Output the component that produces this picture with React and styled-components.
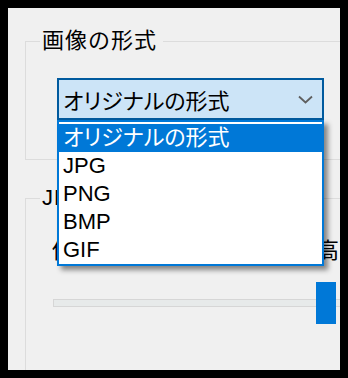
import React from "react";
import styled, { createGlobalStyle } from "styled-components";

const Global = createGlobalStyle`
  html, body { background: #000; }
  body {
    margin: 8px;
    font-family: "Liberation Sans", "Noto Sans CJK JP", sans-serif;
    color: #000;
  }
`;

const Window = styled.div`
  width: 332px;
  height: 362px;
  box-sizing: border-box;
  padding-top: 22px;
  background: #f0f0f0;
  overflow: hidden;
  display: flex;
  flex-direction: column;
`;

const Group = styled.fieldset`
  flex: none;
  width: 360px;
  min-width: 0;
  box-sizing: border-box;
  margin: ${(p) => p.$top}px 0 0 17px;
  padding: ${(p) => p.$padTop}px 0 ${(p) => p.$padBottom}px ${(p) => p.$padLeft}px;
  border: 1px solid #dcdcdc;
`;

const Legend = styled.legend`
  margin-left: ${(p) => p.$offset}px;
  padding: 0 6px 0 2px;
  font-size: 22px;
  line-height: 22px;
  letter-spacing: 1px;
`;

const ComboWrap = styled.div`
  position: relative;
  width: 267px;
`;

const Combo = styled.div`
  height: 42px;
  box-sizing: border-box;
  border: 2px solid #005a9e;
  background: #cce4f7;
  display: flex;
  align-items: center;
  justify-content: space-between;
  padding: 0 9px 0 4px;
  font-size: 22px;
  font-feature-settings: "palt";
`;

const Chevron = styled.svg`
  width: 15px;
  height: 9px;
  flex: none;
`;

const List = styled.ul`
  position: absolute;
  top: 100%;
  left: 0;
  right: 0;
  z-index: 2;
  margin: 0;
  padding: 2px 0 0;
  list-style: none;
  border: 2px solid #0078d7;
  background: #fff;
  box-shadow: 4px 4px 5px rgba(0, 0, 0, 0.45);
`;

const Item = styled.li`
  height: 28px;
  line-height: 28px;
  padding-left: 4px;
  font-size: 22px;
  font-feature-settings: "palt";
  background: ${(p) => (p.$selected ? "#0078d7" : "transparent")};
  color: ${(p) => (p.$selected ? "#fff" : "#000")};
  white-space: nowrap;
`;

const LabelRow = styled.div`
  width: 331px;
  margin-left: 2px;
  display: flex;
  justify-content: space-between;
  font-size: 22px;
  line-height: 22px;
  white-space: nowrap;
`;

const Slider = styled.div`
  position: relative;
  width: 300px;
  height: 42px;
  margin: 20px 0 0 3px;
  display: flex;
  align-items: center;
`;

const Track = styled.div`
  flex: 1;
  height: 8px;
  box-sizing: border-box;
  border: 1px solid #d6d6d6;
  background: #e7eaea;
`;

const Thumb = styled.div`
  position: absolute;
  top: 0;
  width: 20px;
  height: 42px;
  background: #0078d7;
`;

const formats = ["オリジナルの形式", "JPG", "PNG", "BMP", "GIF"];

export default function App() {
  const quality = 94;
  const thumbLeft = (quality / 100) * (300 - 20);
  return (
    <>
      <Global />
      <Window>
        <Group $top={0} $padTop={26} $padBottom={39} $padLeft={31}>
          <Legend $offset={-17}>画像の形式</Legend>
          <ComboWrap>
            <Combo>
              <span>オリジナルの形式</span>
              <Chevron viewBox="0 0 15 9">
                <polyline
                  points="1,1.5 7.5,7.5 14,1.5"
                  fill="none"
                  stroke="#5f5f5f"
                  strokeWidth="1.8"
                />
              </Chevron>
            </Combo>
            <List>
              {formats.map((f, i) => (
                <Item key={f} $selected={i === 0}>
                  {f}
                </Item>
              ))}
            </List>
          </ComboWrap>
        </Group>
        <Group $top={27} $padTop={31} $padBottom={80} $padLeft={24}>
          <Legend $offset={-10}>JPEG品質</Legend>
          <LabelRow>
            <span>低画質</span>
            <span>高画質</span>
          </LabelRow>
          <Slider>
            <Track />
            <Thumb style={{ left: `${thumbLeft}px` }} />
          </Slider>
        </Group>
      </Window>
    </>
  );
}
